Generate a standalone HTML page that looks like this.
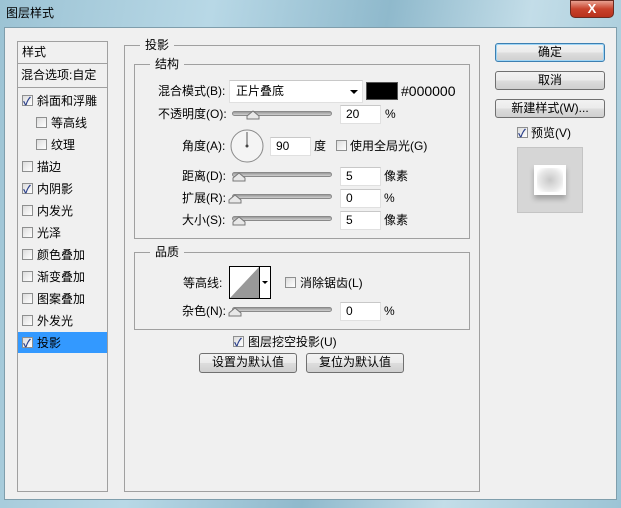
<!DOCTYPE html>
<html><head><meta charset="utf-8"><style>
*{margin:0;padding:0;box-sizing:border-box}
body{width:621px;height:508px;overflow:hidden;background:linear-gradient(100deg,#9cc3d4 0%,#b8d8e6 30%,#8fb9cc 55%,#c3dde8 75%,#9cc4d5 100%);font-family:"Liberation Sans","Noto Sans CJK SC",sans-serif;font-size:12px;color:#000;position:relative}
.a{position:absolute}
.t{white-space:nowrap;line-height:14px}
#client{left:4px;top:27px;width:613px;height:473px;background:#f0f0f0;border:1px solid #7f9eac}
.close{left:570px;top:0;width:44px;height:18px;border-radius:0 0 5px 5px;background:linear-gradient(#e8a090,#c8422c 50%,#b8321e);border:1px solid #6b2a20;color:#fff;font-weight:bold;text-align:center;font-size:13px;line-height:16px}
.box{border:1px solid #a0a0a0}
.cb{width:11px;height:11px;border:1px solid #8e8f8f;background:linear-gradient(135deg,#dcdcdc,#fff)}
.chk::after{content:"✓";position:absolute;left:0px;top:-3px;font-size:11px;color:#2a3f8a;font-weight:bold}
.inp{background:#fff;border:1px solid #e0e0e0;border-top-color:#c8c8c8;height:19px;padding-left:5px;line-height:17px}
.sl{height:5px;border-radius:3px;background:linear-gradient(#9a9a9a,#d0d0d0);border:1px solid #8a8a8a}
.btn{border:1px solid #707070;border-radius:3px;background:linear-gradient(#f2f2f2 0%,#ebebeb 50%,#dddddd 51%,#cfcfcf 100%);text-align:center;line-height:17px;font-size:12px}
.leg{background:#f0f0f0;padding:0 5px}
</style></head><body>
<div class="a t" style="left:6px;top:6px;font-size:12px">图层样式</div>
<div class="a close">X</div>
<div class="a" id="client"></div>

<div class="a box" style="left:17px;top:41px;width:91px;height:451px;background:#f0f0f0"></div>
<div class="a t" style="left:22px;top:45px">样式</div>
<div class="a" style="left:18px;top:63px;width:89px;height:1px;background:#a0a0a0"></div>
<div class="a t" style="left:21px;top:68px">混合选项:自定</div>
<div class="a" style="left:18px;top:87px;width:89px;height:1px;background:#a0a0a0"></div>

<div class="a cb chk" style="left:22px;top:95px"></div><div class="a t" style="left:37px;top:94px">斜面和浮雕</div>
<div class="a cb" style="left:36px;top:117px"></div><div class="a t" style="left:51px;top:116px">等高线</div>
<div class="a cb" style="left:36px;top:139px"></div><div class="a t" style="left:51px;top:138px">纹理</div>
<div class="a cb" style="left:22px;top:161px"></div><div class="a t" style="left:37px;top:160px">描边</div>
<div class="a cb chk" style="left:22px;top:183px"></div><div class="a t" style="left:37px;top:182px">内阴影</div>
<div class="a cb" style="left:22px;top:205px"></div><div class="a t" style="left:37px;top:204px">内发光</div>
<div class="a cb" style="left:22px;top:227px"></div><div class="a t" style="left:37px;top:226px">光泽</div>
<div class="a cb" style="left:22px;top:249px"></div><div class="a t" style="left:37px;top:248px">颜色叠加</div>
<div class="a cb" style="left:22px;top:271px"></div><div class="a t" style="left:37px;top:270px">渐变叠加</div>
<div class="a cb" style="left:22px;top:293px"></div><div class="a t" style="left:37px;top:292px">图案叠加</div>
<div class="a cb" style="left:22px;top:315px"></div><div class="a t" style="left:37px;top:314px">外发光</div>
<div class="a" style="left:18px;top:332px;width:89px;height:21px;background:#3399ff"></div>
<div class="a cb chk" style="left:22px;top:337px"></div><div class="a t" style="left:37px;top:336px">投影</div>

<div class="a box" style="left:124px;top:45px;width:356px;height:447px"></div>
<div class="a t leg" style="left:140px;top:38px">投影</div>
<div class="a box" style="left:134px;top:64px;width:336px;height:175px"></div>
<div class="a t leg" style="left:150px;top:57px">结构</div>

<div class="a t" style="left:158px;top:84px">混合模式(B):</div>
<div class="a inp" style="left:229px;top:80px;width:134px;height:23px;line-height:21px;padding-left:6px">正片叠底</div>
<div class="a" style="left:350px;top:90px;width:0;height:0;border-left:4px solid transparent;border-right:4px solid transparent;border-top:4px solid #000"></div>
<div class="a" style="left:366px;top:82px;width:32px;height:18px;background:#000;border:1px solid #555"></div>
<div class="a t" style="left:401px;top:84px;font-size:14px">#000000</div>

<div class="a t" style="left:158px;top:107px">不透明度(O):</div>
<div class="a sl" style="left:232px;top:111px;width:100px"></div>
<svg class="a" style="left:246px;top:110px" width="14" height="10"><path d="M1 9 L1 6 L7 1 L13 6 L13 9 Z" fill="#e8e8e8" stroke="#777"/></svg>
<div class="a inp" style="left:340px;top:105px;width:41px">20</div>
<div class="a t" style="left:385px;top:107px">%</div>

<div class="a t" style="left:182px;top:139px">角度(A):</div>
<svg class="a" style="left:230px;top:129px" width="35" height="35"><circle cx="17" cy="17" r="16" fill="#f4f4f4" stroke="#8a8a8a"/><line x1="17" y1="17" x2="17" y2="3" stroke="#555"/><circle cx="17" cy="17" r="1.5" fill="#444"/></svg>
<div class="a inp" style="left:270px;top:137px;width:41px">90</div>
<div class="a t" style="left:314px;top:139px">度</div>
<div class="a cb" style="left:336px;top:140px"></div><div class="a t" style="left:350px;top:139px">使用全局光(G)</div>

<div class="a t" style="left:182px;top:169px">距离(D):</div>
<div class="a sl" style="left:232px;top:172px;width:100px"></div>
<svg class="a" style="left:232px;top:172px" width="14" height="10"><path d="M1 9 L1 6 L7 1 L13 6 L13 9 Z" fill="#e8e8e8" stroke="#777"/></svg>
<div class="a inp" style="left:340px;top:167px;width:41px">5</div>
<div class="a t" style="left:384px;top:169px">像素</div>

<div class="a t" style="left:182px;top:191px">扩展(R):</div>
<div class="a sl" style="left:232px;top:194px;width:100px"></div>
<svg class="a" style="left:228px;top:194px" width="14" height="10"><path d="M1 9 L1 6 L7 1 L13 6 L13 9 Z" fill="#e8e8e8" stroke="#777"/></svg>
<div class="a inp" style="left:340px;top:189px;width:41px">0</div>
<div class="a t" style="left:384px;top:191px">%</div>

<div class="a t" style="left:182px;top:213px">大小(S):</div>
<div class="a sl" style="left:232px;top:216px;width:100px"></div>
<svg class="a" style="left:232px;top:216px" width="14" height="10"><path d="M1 9 L1 6 L7 1 L13 6 L13 9 Z" fill="#e8e8e8" stroke="#777"/></svg>
<div class="a inp" style="left:340px;top:211px;width:41px">5</div>
<div class="a t" style="left:384px;top:213px">像素</div>

<div class="a box" style="left:134px;top:252px;width:336px;height:78px"></div>
<div class="a t leg" style="left:150px;top:245px">品质</div>
<div class="a t" style="left:183px;top:276px">等高线:</div>
<svg class="a" style="left:229px;top:266px" width="42" height="33"><rect x="0.5" y="0.5" width="41" height="32" fill="#fff" stroke="#000"/><path d="M1 32 L30 1 L30 32 Z" fill="#999"/><line x1="30.5" y1="0" x2="30.5" y2="33" stroke="#000"/><path d="M33 15 L39 15 L36 18 Z" fill="#000"/></svg>
<div class="a cb" style="left:285px;top:277px"></div><div class="a t" style="left:300px;top:276px">消除锯齿(L)</div>
<div class="a t" style="left:182px;top:304px">杂色(N):</div>
<div class="a sl" style="left:232px;top:307px;width:100px"></div>
<svg class="a" style="left:228px;top:307px" width="14" height="10"><path d="M1 9 L1 6 L7 1 L13 6 L13 9 Z" fill="#e8e8e8" stroke="#777"/></svg>
<div class="a inp" style="left:340px;top:302px;width:41px">0</div>
<div class="a t" style="left:384px;top:304px">%</div>

<div class="a cb chk" style="left:233px;top:336px"></div><div class="a t" style="left:248px;top:335px">图层挖空投影(U)</div>
<div class="a btn" style="left:199px;top:353px;width:98px;height:20px">设置为默认值</div>
<div class="a btn" style="left:306px;top:353px;width:98px;height:20px">复位为默认值</div>

<div class="a btn" style="left:495px;top:43px;width:110px;height:19px;border-color:#3c7fb1;box-shadow:inset 0 0 0 1px #9fd5f5">确定</div>
<div class="a btn" style="left:495px;top:71px;width:110px;height:19px">取消</div>
<div class="a btn" style="left:495px;top:99px;width:110px;height:19px">新建样式(W)...</div>
<div class="a cb chk" style="left:517px;top:127px"></div><div class="a t" style="left:531px;top:126px">预览(V)</div>
<div class="a" style="left:517px;top:147px;width:66px;height:66px;background:#d6d6d6;border:1px solid #c4c4c4"></div>
<div class="a" style="left:534px;top:165px;width:32px;height:30px;background:#fff;box-shadow:0 4px 5px rgba(0,0,0,0.25)"></div>
<div class="a" style="left:537px;top:168px;width:26px;height:24px;background:radial-gradient(#c8c8c8,#e8e8e8 60%,#fff 90%)"></div>
</body></html>
